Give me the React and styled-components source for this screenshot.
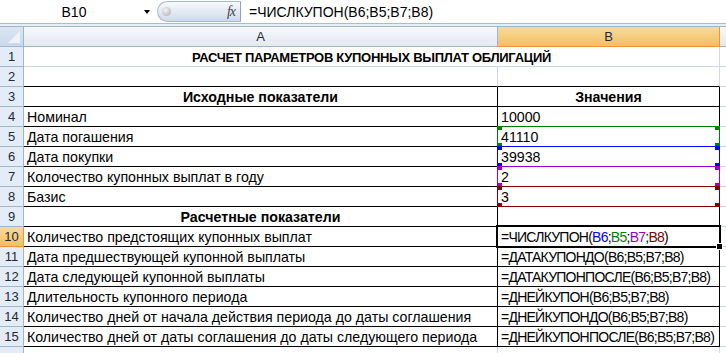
import React from "react";
import styled, { createGlobalStyle, css } from "styled-components";

const GlobalStyle = createGlobalStyle`
  html, body {
    margin: 0;
    padding: 0;
    background: #fff;
  }
  body {
    font-family: "Liberation Sans", Arial, sans-serif;
  }
`;

const REF = {
  B5: "#008000",
  B6: "#0000ff",
  B7: "#9900cc",
  B8: "#800000",
};

const Sheet = styled.div`
  width: 726px;
  height: 353px;
  overflow: hidden;
  background: #fff;
  display: flex;
  flex-direction: column;
`;

/* formula bar */
const FormulaBar = styled.div`
  display: flex;
  align-items: stretch;
  height: 24px;
  box-sizing: border-box;
  border-bottom: 1px solid #a9bcd4;
  background: #fff;
  flex-shrink: 0;
`;

const NameBox = styled.div`
  width: 154px;
  display: flex;
  align-items: center;
  font-size: 14px;
  color: #000;
`;

const NameText = styled.span`
  flex: 1;
  text-align: center;
  padding-left: 4px;
`;

const DropArrow = styled.span`
  width: 0;
  height: 0;
  border-left: 3.5px solid transparent;
  border-right: 3.5px solid transparent;
  border-top: 4px solid #000;
  margin-right: 4px;
  margin-top: 1px;
`;

const FxButton = styled.div`
  width: 84px;
  margin: 1px 0 1px 3px;
  border-radius: 11px 0 0 11px;
  border: 1px solid #a7b9d1;
  border-right: 1px solid #8ea4c1;
  box-sizing: border-box;
  background: linear-gradient(#f7f9fc 0%, #e3eaf4 50%, #cfdaea 100%);
  display: flex;
  align-items: center;
  justify-content: space-between;
  padding: 0 5px 0 4px;
`;

const Knob = styled.span`
  width: 9px;
  height: 9px;
  border-radius: 50%;
  background: radial-gradient(circle at 40% 35%, #f4f4f4, #a9a9a9);
`;

const FxLabel = styled.span`
  font-family: "Liberation Serif", "Times New Roman", serif;
  font-style: italic;
  font-size: 14px;
  color: #444;
  letter-spacing: -1px;
`;

const FormulaInput = styled.div`
  flex: 1;
  display: flex;
  align-items: center;
  padding-left: 8px;
  font-size: 14px;
  color: #000;
  white-space: nowrap;
`;

const Strip = styled.div`
  height: 3px;
  box-sizing: border-box;
  background: #e6edf6;
  border-bottom: 1px solid #9eb6ce;
  flex-shrink: 0;
`;

/* grid */
const Grid = styled.div`
  display: grid;
  grid-template-columns: 24px 474px 222px 1fr;
  grid-auto-rows: 20px;
`;

const selectedHead = css`
  background: linear-gradient(#f9d99f, #f1c15f);
  border-color: #f29536;
`;

const Corner = styled.div`
  box-sizing: border-box;
  border-right: 1px solid #9eb6ce;
  border-bottom: 1px solid #9eb6ce;
  background: linear-gradient(#dbe6f3, #c9d9ec);
  position: relative;
  &::after {
    content: "";
    position: absolute;
    right: 3px;
    bottom: 3px;
    width: 0;
    height: 0;
    border-left: 12px solid transparent;
    border-bottom: 12px solid #eef3f9;
  }
`;

const ColHead = styled.div`
  box-sizing: border-box;
  border-right: 1px solid #9eb6ce;
  border-bottom: 1px solid #9eb6ce;
  background: linear-gradient(#f7f9fc, #e4e9f0);
  display: flex;
  align-items: center;
  justify-content: center;
  font-size: 13px;
  color: #1e2a3a;
  ${(p) => p.$selected && selectedHead}
`;

const RowHead = styled.div`
  box-sizing: border-box;
  border-right: 1px solid #9eb6ce;
  border-bottom: 1px solid #9eb6ce;
  background: #e4ecf7;
  display: flex;
  align-items: center;
  justify-content: center;
  font-size: 13px;
  color: #1e2a3a;
  ${(p) => p.$selected && selectedHead}
`;

const Cell = styled.div`
  box-sizing: border-box;
  border-right: 1px solid ${(p) => (p.$rightDark ? "#000" : "#d0d7e5")};
  border-bottom: 1px solid ${(p) => (p.$bottomDark ? "#000" : "#d0d7e5")};
  background: #fff;
  display: flex;
  align-items: flex-end;
  justify-content: ${(p) => (p.$center ? "center" : "flex-start")};
  padding: 0 3px 0 3px;
  font-size: 14.2px;
  line-height: 17px;
  font-weight: ${(p) => (p.$bold ? 700 : 400)};
  color: #000;
  white-space: nowrap;
  overflow: visible;
  ${(p) => p.$formula && "font-size: 14px; letter-spacing: -0.75px;"}
  ${(p) => p.$title && "font-size: 13px; letter-spacing: -0.3px;"}
  ${(p) => p.$span && `grid-column: span ${p.$span};`}
  ${(p) => p.$overlay && "position: relative;"}
`;

const RefBox = styled.div`
  position: absolute;
  top: -1px;
  left: -1px;
  right: -1px;
  bottom: -1px;
  border: 1px solid ${(p) => p.$color};
  pointer-events: none;
`;

const Handle = styled.span`
  position: absolute;
  width: 5px;
  height: 4px;
  background: ${(p) => p.$color};
  ${(p) => (p.$top ? "top: -1px;" : "bottom: -1px;")}
  ${(p) => (p.$left ? "left: -1px;" : "right: -1px;")}
`;

const ActiveBox = styled.div`
  position: absolute;
  top: -2px;
  left: -2px;
  right: -2px;
  bottom: -2px;
  border: 2px solid #000;
  pointer-events: none;
`;

const FillHandle = styled.span`
  position: absolute;
  right: -4px;
  bottom: -4px;
  width: 5px;
  height: 5px;
  background: #000;
  border: 1px solid #fff;
`;

const Ref = styled.span`
  color: ${(p) => p.$color};
`;

const rows = [
  { n: 1, title: "РАСЧЕТ ПАРАМЕТРОВ КУПОННЫХ ВЫПЛАТ ОБЛИГАЦИЙ" },
  { n: 2, a: "", b: "", darkBottom: true },
  { n: 3, a: "Исходные показатели", b: "Значения", head: true },
  { n: 4, a: "Номинал", b: "10000" },
  { n: 5, a: "Дата погашения", b: "41110", ref: "B5" },
  { n: 6, a: "Дата покупки", b: "39938", ref: "B6" },
  { n: 7, a: "Колочество купонных выплат в году", b: "2", ref: "B7" },
  { n: 8, a: "Базис", b: "3", ref: "B8" },
  { n: 9, a: "Расчетные показатели", b: "", head: true },
  { n: 10, a: "Количество предстоящих купонных выплат", active: true },
  { n: 11, a: "Дата предшествующей купонной выплаты", b: "=ДАТАКУПОНДО(B6;B5;B7;B8)" },
  { n: 12, a: "Дата следующей купонной выплаты", b: "=ДАТАКУПОНПОСЛЕ(B6;B5;B7;B8)" },
  { n: 13, a: "Длительность купонного периода", b: "=ДНЕЙКУПОН(B6;B5;B7;B8)" },
  { n: 14, a: "Количество дней от начала действия периода до даты соглашения", b: "=ДНЕЙКУПОНДО(B6;B5;B7;B8)" },
  { n: 15, a: "Количество дней от даты соглашения до даты следующего периода", b: "=ДНЕЙКУПОНПОСЛЕ(B6;B5;B7;B8)" },
  { n: 16, a: "", b: "", hideNum: true },
];

const ActiveFormula = () => (
  <span>
    =ЧИСЛКУПОН(<Ref $color={REF.B6}>B6</Ref>;<Ref $color={REF.B5}>B5</Ref>;
    <Ref $color={REF.B7}>B7</Ref>;<Ref $color={REF.B8}>B8</Ref>)
  </span>
);

const Row = ({ row }) => {
  const boxed = row.n >= 3 && row.n <= 15;
  const bottomDark = boxed || row.darkBottom;
  const isFormula = row.active || (row.b || "").startsWith("=");
  return (
    <>
      <RowHead $selected={row.active}>{row.hideNum ? null : row.n}</RowHead>
      {row.title ? (
        <Cell $span={2} $center $bold $title>
          {row.title}
        </Cell>
      ) : (
        <>
          <Cell $rightDark={boxed} $bottomDark={bottomDark} $center={row.head} $bold={row.head}>
            {row.a}
          </Cell>
          <Cell
            $rightDark={boxed}
            $bottomDark={bottomDark}
            $center={row.head}
            $bold={row.head}
            $formula={isFormula}
            $overlay={row.ref || row.active}
          >
            {row.active ? <ActiveFormula /> : row.b}
            {row.ref && (
              <RefBox $color={REF[row.ref]}>
                <Handle $color={REF[row.ref]} $top $left />
                <Handle $color={REF[row.ref]} $top />
                <Handle $color={REF[row.ref]} $left />
                <Handle $color={REF[row.ref]} />
              </RefBox>
            )}
            {row.active && (
              <ActiveBox>
                <FillHandle />
              </ActiveBox>
            )}
          </Cell>
        </>
      )}
      <Cell />
    </>
  );
};

export default function App() {
  return (
    <>
      <GlobalStyle />
      <Sheet>
        <FormulaBar>
          <NameBox>
            <NameText>B10</NameText>
            <DropArrow />
          </NameBox>
          <FxButton>
            <Knob />
            <FxLabel>fx</FxLabel>
          </FxButton>
          <FormulaInput>=ЧИСЛКУПОН(B6;B5;B7;B8)</FormulaInput>
        </FormulaBar>
        <Strip />
        <Grid>
          <Corner />
          <ColHead>A</ColHead>
          <ColHead $selected>B</ColHead>
          <ColHead />
          {rows.map((r) => (
            <Row key={r.n} row={r} />
          ))}
        </Grid>
      </Sheet>
    </>
  );
}
